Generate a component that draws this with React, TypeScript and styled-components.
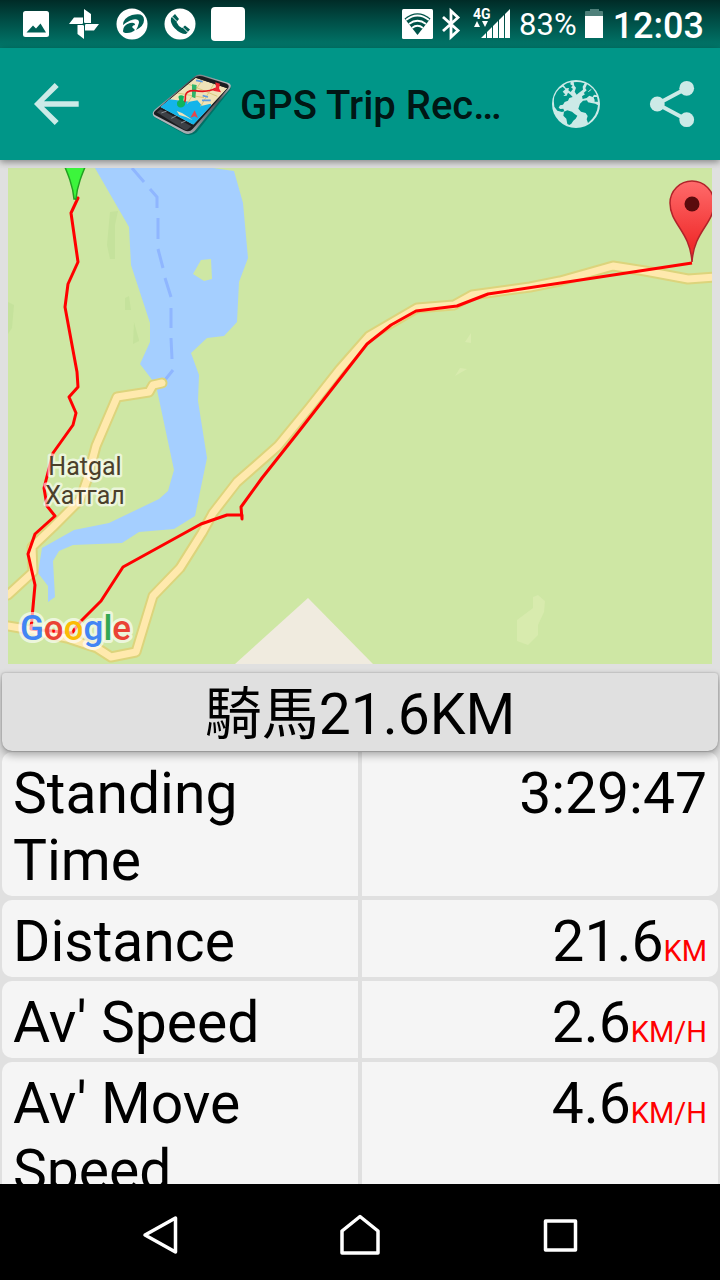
import React from "react";
import styled, { createGlobalStyle } from "styled-components";

const GlobalStyle = createGlobalStyle`
  * { box-sizing: border-box; }
  body {
    margin: 0;
    background: #e0e0e0;
    color: #000;
    font-family: Roboto, "Noto Sans CJK TC", sans-serif;
  }
`;

const Screen = styled.div`
  display: flex;
  flex-direction: column;
  height: 100vh;
  overflow: hidden;
`;

const StatusBar = styled.header`
  display: flex;
  flex: none;
  align-items: center;
  justify-content: space-between;
  height: 48px;
  padding: 0 16px 0 20px;
  color: #fff;
  background: linear-gradient(#002b27, #004f47 45%, #00796c);
`;

const StatusGroup = styled.div<{ $gap: number }>`
  display: flex;
  align-items: center;
  gap: ${(p) => p.$gap}px;
`;

const Icon = styled.svg`
  display: block;
  flex: none;
  overflow: visible;
`;

const BatteryText = styled.span`
  padding-top: 2px;
  font-size: 31px;
  line-height: 46px;
`;

const Clock = styled.time`
  padding-top: 4px;
  font-size: 36px;
  font-weight: 500;
  line-height: 44px;
`;

const AppBar = styled.div`
  position: relative;
  z-index: 1;
  display: flex;
  flex: none;
  align-items: center;
  height: 112px;
  padding: 0 24px 0 32px;
  background: #009688;
  box-shadow: 0 2px 7px rgba(0, 0, 0, 0.42);
`;

const BarButton = styled.button`
  flex: none;
  padding: 0;
  border: 0;
  background: none;
  color: #cceae7;
`;

const Brand = styled.div`
  display: flex;
  flex: 1;
  align-items: center;
  gap: 7px;
  min-width: 0;
  padding-left: 70px;
`;

const AppTitle = styled.h1`
  margin: 0;
  padding-top: 4px;
  overflow: hidden;
  color: rgba(0, 0, 0, 0.87);
  font-size: 40px;
  font-weight: 500;
  line-height: 48px;
  white-space: nowrap;
`;

const BarActions = styled.div`
  display: flex;
  flex: none;
  gap: 48px;
`;

const Content = styled.main`
  flex: 1;
  min-height: 0;
  overflow: hidden;
`;

const MapFrame = styled.div`
  padding: 8px 8px 0;
`;

const MapDrawing = styled.svg`
  display: block;
  width: 100%;
  height: auto;
`;

const TripName = styled.button`
  position: relative;
  z-index: 1;
  display: block;
  width: calc(100% - 4px);
  height: 78px;
  margin: 9px 2px 0;
  padding: 5px 0 0;
  border: 0;
  border-radius: 3px 3px 10px 10px;
  background: #e0e0e0;
  box-shadow: 0 0 2px rgba(0, 0, 0, 0.3), 0 4px 8px rgba(0, 0, 0, 0.32);
  color: #000;
  font: inherit;
  font-size: 57px;
  line-height: 67px;
`;

const Stats = styled.table`
  display: block;
  margin: 1px 2px 0;
`;

const StatsBody = styled.tbody`
  display: flex;
  flex-direction: column;
  gap: 4px;
`;

const StatRow = styled.tr`
  display: grid;
  grid-template-columns: 1fr 1fr;
  gap: 4px;
  font-size: 57px;
  line-height: 67px;
`;

const StatLabel = styled.th`
  padding: 8px 11px 2px;
  border-radius: 10px 0 0 10px;
  background: #f5f5f5;
  font-weight: 400;
  text-align: left;
`;

const StatValue = styled.td`
  padding: 8px 11px 2px;
  border-radius: 0 10px 10px 0;
  background: #f5f5f5;
  text-align: right;
`;

const Unit = styled.span`
  color: #f00;
  font-size: 29px;
  line-height: 1;
`;

const NavBar = styled.nav`
  display: flex;
  flex: none;
  height: 96px;
  padding: 0 60px;
  background: #000;
`;

const NavButton = styled.button`
  display: flex;
  flex: 1;
  align-items: center;
  justify-content: center;
  padding: 6px 0 0;
  border: 0;
  background: none;
  color: #fff;
`;

const ROAD_WEST = "M162 383 L153 385 L149 392 L117 397 L96 446 L87 480 L80 500 L53 527 L32 547 L33 572 L8 595";
const ROAD_MAIN =
  "M8 626 L20 628 L67 638 L97 648 L111 657 L136 652 L153 596 L180 568 L202 533 L213 513 L237 482 L278 446 L310 407 L340 369 L369 336 L417 308 L454 305 L472 295 L530 287 L560 281 L613 266 L645 271 L688 279 L714 277";
const ROUTE =
  "M75 199 L78 198 L71 213 L78 262 L68 284 L65 307 L77 372 L78 387 L69 397 L76 413 L73 425 L53 453 L44 488 L47 506 L55 516 L35 534 L28 554 L35 585 L31 629 L72 633 L80 622 L101 601 L123 567 L201 524 L227 515 L242 515 L242 519 L241 507 L262 478 L300 430 L367 344 L391 325 L416 311 L457 306 L488 294 L692 263";

function RouteMap() {
  return (
    <MapDrawing viewBox="8 168 704 496" role="img" aria-label="Route map near Hatgal">
      <defs>
        <linearGradient id="pin" x1="0" y1="0" x2="0" y2="1">
          <stop offset="0" stopColor="#ff6b6b" />
          <stop offset="0.8" stopColor="#f02c2c" />
        </linearGradient>
      </defs>
      <rect x="8" y="168" width="704" height="496" fill="#cee7a4" />
      <g fill="#c5e29c">
        <path d="M110 212 L118 211 L115 225 L115 259 L110 259 L107 245 Z" />
        <path d="M125 298 L129 296 L131 310 L125 310 Z" />
        <path d="M134 322 L139 340 L139 341 L133 344 Z" />
        <path d="M8 302 L14 305 L12 328 L8 334 Z" />
      </g>
      <g fill="#d8ebae">
        <path d="M533 597 L538 595 L545 601 L544 612 L538 625 L538 635 L528 645 L517 641 L517 620 L533 608 Z" />
        <path d="M465 342 L471 333 L471 343 Z M455 376 L460 368 L467 369 Z" />
      </g>
      <path d="M308 598 L235 664 H373 Z" fill="#f0ebdf" />
      <path
        d="M95 168 L129 227 L131 265 L150 323 L150 342 L140 364 L153 381 L157 390 L160 404 L174 470 L168 491 L159 499 L109 523 L74 530 L42 548 L38 573 L48 586 L48 602 L55 597 L53 561 L59 551 L73 545 L122 543 L139 532 L174 529 L195 516 L207 458 L198 401 L199 375 L191 353 L207 338 L224 336 L237 322 L239 282 L248 258 L243 203 L234 171 L213 168 Z"
        fill="#a5cfff"
      />
      <path d="M193 274 L201 260 L211 259 L212 279 L204 281 Z" fill="#cee7a4" />
      <path
        d="M132 168 L144 182 M150 189 L157 197 V208 M158 218 V239 M158 249 L163 268 M165 278 L171 297 M171 308 V328 M171 338 L172 359 M173 370 L165 380"
        fill="none"
        stroke="#8fb6ff"
        strokeWidth="3"
      />
      <g fill="none" strokeLinecap="round" strokeLinejoin="round">
        <path d={ROAD_WEST} stroke="#dcd47c" strokeWidth="11" />
        <path d={ROAD_MAIN} stroke="#dcd47c" strokeWidth="11" />
        <path d={ROAD_WEST} stroke="#ffe9ad" strokeWidth="7" />
        <path d={ROAD_MAIN} stroke="#ffe9ad" strokeWidth="7" />
        <path d={ROUTE} stroke="#f00" strokeWidth="3" strokeLinecap="butt" />
      </g>
      <g
        fill="#4b402b"
        stroke="#fff"
        strokeOpacity="0.6"
        strokeWidth="5"
        strokeLinejoin="round"
        paintOrder="stroke"
        fontFamily="Roboto, sans-serif"
        fontSize="25"
        textAnchor="middle"
      >
        <text x="85" y="475">Hatgal</text>
        <text x="85" y="504">Хатгал</text>
      </g>
      <text
        x="20"
        y="640"
        fontFamily="Roboto, sans-serif"
        fontSize="35"
        fontWeight="500"
        stroke="#fff"
        strokeOpacity="0.65"
        strokeWidth="6"
        strokeLinejoin="round"
        paintOrder="stroke"
      >
        <tspan fill="#4285f4">G</tspan>
        <tspan fill="#ea4335">o</tspan>
        <tspan fill="#fbbc05">o</tspan>
        <tspan fill="#4285f4">g</tspan>
        <tspan fill="#34a853">l</tspan>
        <tspan fill="#ea4335">e</tspan>
      </text>
      <path d="M62 160 C68 174 73 186 74 199 H76 C77 186 82 174 88 160 Z" fill="#3cf53c" stroke="#22a122" strokeWidth="1.5" />
      <path
        d="M692 262 C690 231 670 224 670 203 A22 22 0 0 1 714 203 C714 224 694 231 692 262 Z"
        fill="url(#pin)"
        stroke="#b1232a"
        strokeWidth="1.5"
      />
      <circle cx="692" cy="204" r="7.5" fill="#5a0b0d" />
    </MapDrawing>
  );
}

function PhoneLogo() {
  return (
    <Icon width="83" height="67" viewBox="448 72 249 201" aria-hidden="true">
      <defs>
        <linearGradient id="rim" x1="0" y1="1" x2="1" y2="0">
          <stop offset="0" stopColor="#d9dce0" />
          <stop offset="0.35" stopColor="#8b9097" />
          <stop offset="0.7" stopColor="#4d5157" />
          <stop offset="1" stopColor="#e4e7ea" />
        </linearGradient>
        <clipPath id="display">
          <path d="M585 92 L680 124 L578 233 L479 180 Z" />
        </clipPath>
      </defs>
      <path d="M466 214 Q452 206 464 192 L582 94 Q594 82 608 88 L682 110 Q696 116 688 130 L588 256 Q572 270 552 262 Z" fill="#00574f" opacity="0.6" />
      <path d="M462 210 Q450 200 462 188 L580 90 Q592 80 606 84 L682 107 Q696 112 687 126 L582 252 Q568 266 550 258 Z" fill="url(#rim)" />
      <path d="M464 205 Q455 199 464 191 L582 92 Q592 84 605 88 L678 110 Q688 115 682 124 L576 246 Q566 257 550 250 Z" fill="#1b1d20" />
      <path d="M468 196 L480 187 L572 238 L560 248 Q556 250 548 246 Z" fill="#3c4045" />
      <path d="M482 198 L498 192 M512 214 L528 206 M541 228 L556 221" stroke="#8a8f95" strokeWidth="3" />
      <g clipPath="url(#display)">
        <path d="M585 92 L680 124 L578 233 L479 180 Z" fill="#efe2b8" />
        <path d="M460 180 L500 156 L530 160 L566 164 L590 160 L604 176 L630 170 L640 190 L580 240 Z" fill="#14b4ea" />
        <path d="M528 192 L544 198 L566 212 L576 220 L556 210 L536 204 Z" fill="#efe2b8" />
        <path d="M560 110 L650 148 M606 96 L560 170 M640 110 L600 178 M530 138 L610 152" stroke="#d9c77b" strokeWidth="3" fill="none" />
        <path d="M574 112 L588 114 L584 154 L574 150 Z" fill="#2fb56a" />
        <path d="M606 146 L622 150 M586 100 L606 104 M604 160 L630 160" stroke="#5d9be0" strokeWidth="5" />
      </g>
      <path d="M544 174 Q556 166 554 148 Q554 130 582 131 Q622 137 646 124" fill="none" stroke="#e3131b" strokeWidth="5" />
      <path d="M644 106 L658 110 L655 124 L661 136 L637 131 L646 121 Z" fill="#ef2633" />
      <path d="M530 176 Q526 164 536 160 L533 149 Q540 141 550 148 L548 160 Q558 168 550 178 Q538 186 530 176 Z" fill="#0eb45d" />
      <path d="M582 190 L592 213 L582 208 L569 212 Z" fill="#e5474d" />
    </Icon>
  );
}

function GlobeIcon() {
  return (
    <Icon width="48" height="48" viewBox="576 104 144 144" aria-hidden="true">
      <circle cx="648" cy="176" r="72" fill="currentColor" />
      <g fill="#009688">
        <path d="M583 184 Q576 150 598 130 L608 124 L616 132 L608 139 L616 147 L610 152 L620 151 L624 142 L632 148 L638 155 L628 158 L624 166 L614 170 L609 178 L600 180 L596 187 L601 191 L610 190 L613 198 L606 200 L592 196 Z" />
        <path d="M611 120 Q620 113 632 111 L631 117 L638 121 L633 126 L639 131 L632 140 L625 135 L627 128 L618 129 Z" />
        <path d="M641 111 Q655 108 674 114 L668 124 L669 133 L657 142 L650 148 L644 139 L648 127 L643 121 Z" />
        <path d="M612 199 L622 195 L636 199 L645 207 L652 211 L647 220 L640 226 L634 235 L628 239 L622 236 L619 220 L610 211 Z" />
        <path d="M660 175 L669 166 L681 165 L684 171 L694 173 L706 175 L714 180 Q712 210 684 233 L680 222 L683 212 L677 203 L663 199 L655 190 Z" />
        <path d="M681 117 Q702 128 710 150 L702 148 L698 155 L688 151 L680 158 L668 161 L666 153 L675 147 L671 143 L680 135 L676 129 Z" />
        <path d="M701 155 L711 155 L714 169 L704 169 Z" />
      </g>
      <path d="M680 162 L690 165 L704 164 M685 139 L694 132 M613 143 L620 137" stroke="currentColor" strokeWidth="3" fill="none" />
    </Icon>
  );
}

const stats = [
  { label: "Standing Time", value: "3:29:47", unit: "" },
  { label: "Distance", value: "21.6", unit: "KM" },
  { label: "Av' Speed", value: "2.6", unit: "KM/H" },
  { label: "Av' Move Speed", value: "4.6", unit: "KM/H" },
];

export default function App() {
  return (
    <Screen>
      <GlobalStyle />
      <StatusBar>
        <StatusGroup $gap={16}>
          <Icon width="32" height="32" viewBox="0 0 32 32">
            <rect x="3" y="3" width="26" height="26" rx="2.5" fill="#fff" />
            <path d="M6.5 24.5 L13 17.5 L16 20.5 L20.5 15.5 L26 24.5 Z" fill="#005f55" />
          </Icon>
          <Icon width="32" height="32" viewBox="0 0 32 32" fill="#fff">
            <path d="M16 1 L23 6 V15 H16 Z M31 16 L26 22.500 H17 V16 Z M16 31 L9.500 26 V17 H16 Z M1 16 L6 9.500 H15 V16 Z" />
            <circle cx="16" cy="16" r="1.500" fill="#005f55" />
          </Icon>
          <Icon width="32" height="32" viewBox="0 0 32 32">
            <circle cx="16" cy="16" r="15.500" fill="#fff" />
            <path d="M7 17 Q7 10 16 7 Q28 4 28 12 Q28 18 20 22 Q24 16 21 13 Q16 10 7 17 Z" fill="#005f55" />
            <path d="M7 23 Q7 17 14 15 Q19 14 19 17 Q17 17 16 19 Q18 21 19 22 Q16 25 11 25 Q7 25 7 23 Z" fill="#005f55" />
            <path d="M13 13 Q19 10 22 12 Q24 14 22 17 Q22 14 19 13 Q16 12 13 13 Z" fill="#fff" />
          </Icon>
          <Icon width="32" height="32" viewBox="0 0 32 32">
            <circle cx="16" cy="16" r="15.500" fill="#fff" />
            <path d="M7 10 L11 6 L15 11 L12.500 14 Q14 18 18 20 L21 17.500 L26 21.500 L22 26 Q16 26 10.500 20 Q6 15 7 10 Z" fill="#005f55" />
            <path d="M8 8.500 L13 13.500 M18.500 19 L23.500 24" stroke="#fff" strokeWidth="1" />
          </Icon>
          <Icon width="32" height="32" viewBox="0 0 32 32">
            <rect x="-1" y="-1" width="34" height="34" rx="4" fill="#fff" />
          </Icon>
        </StatusGroup>
        <StatusGroup $gap={8}>
          <Icon width="32" height="32" viewBox="0 0 32 32">
            <rect x="1" y="1" width="31" height="30" rx="1.500" fill="#fff" />
            <path d="M16.500 27 L3.500 10.500 Q16.500 0 29.500 10.500 Z" fill="#005349" />
            <path d="M5 12 Q16.500 3 28 12 M8 16 Q16.500 9.500 25 16 M11 20 Q16.500 15.500 22 20" fill="none" stroke="#fff" strokeWidth="1.800" />
          </Icon>
          <Icon width="20" height="32" viewBox="0 0 20 32">
            <path d="M2 9 L17 22.500 L10 29 V3 L17 9.500 L2 23" fill="none" stroke="#fff" strokeWidth="2.800" />
          </Icon>
          <Icon width="42" height="32" viewBox="0 0 42 32" fill="#fff">
            <text x="4" y="11" fontSize="14" fontWeight="700" fontFamily="Roboto, sans-serif">4G</text>
            <path d="M5 19 L8 13 L11 19 Z M13 13 H19 L16 19 Z" />
            <path d="M12 30 L17 25 V30 Z M18 24 L23 19 V30 H18 Z M24 18 L29 13 V30 H24 Z M30 12 L35 7 V30 H30 Z M36 6 L41 1 V30 H36 Z" />
          </Icon>
          <BatteryText>83%</BatteryText>
          <Icon width="20" height="32" viewBox="0 0 20 32">
            <path d="M0 4 Q0 3 1 3 H5 V1 H14 V3 H17 Q18 3 18 4 V10 H0 Z" fill="#4f807a" />
            <path d="M0 8 H18 V30 H0 Z" fill="#fff" />
          </Icon>
          <Clock>12:03</Clock>
        </StatusGroup>
      </StatusBar>
      <AppBar>
        <BarButton aria-label="Back">
          <Icon width="48" height="48" viewBox="0 0 48 48" fill="currentColor">
            <path d="M2 24 L22.700 3 L26.700 7 L12 21.300 H46.700 V26.700 H12 L26.700 41 L22.700 45 Z" />
          </Icon>
        </BarButton>
        <Brand>
          <PhoneLogo />
          <AppTitle>GPS Trip Rec…</AppTitle>
        </Brand>
        <BarActions>
          <BarButton aria-label="Open on globe">
            <GlobeIcon />
          </BarButton>
          <BarButton aria-label="Share">
            <Icon width="48" height="48" viewBox="0 0 48 48" fill="currentColor">
              <path d="M38.700 8.300 L9.300 24 L38.700 39.700" fill="none" stroke="currentColor" strokeWidth="4" />
              <circle cx="9.300" cy="24" r="7.400" />
              <circle cx="38.700" cy="8.300" r="7.400" />
              <circle cx="38.700" cy="39.700" r="7.400" />
            </Icon>
          </BarButton>
        </BarActions>
      </AppBar>
      <Content>
        <MapFrame>
          <RouteMap />
        </MapFrame>
        <TripName>騎馬21.6KM</TripName>
        <Stats>
          <StatsBody>
            {stats.map((s) => (
              <StatRow key={s.label}>
                <StatLabel scope="row">{s.label}</StatLabel>
                <StatValue>
                  {s.value}
                  {s.unit && <Unit>{s.unit}</Unit>}
                </StatValue>
              </StatRow>
            ))}
          </StatsBody>
        </Stats>
      </Content>
      <NavBar>
        <NavButton aria-label="Back">
          <Icon width="40" height="44" viewBox="0 0 40 44">
            <path d="M35.500 5 V39 L5 22 Z" fill="none" stroke="#fff" strokeWidth="3.500" strokeLinejoin="round" />
          </Icon>
        </NavButton>
        <NavButton aria-label="Home">
          <Icon width="40" height="44" viewBox="0 0 40 44">
            <path d="M2 40 V18 L20 3.500 L38 18 V40 Z" fill="none" stroke="#fff" strokeWidth="3.500" strokeLinejoin="round" />
          </Icon>
        </NavButton>
        <NavButton aria-label="Recent apps">
          <Icon width="40" height="44" viewBox="0 0 40 44">
            <rect x="5.500" y="8" width="30" height="29" fill="none" stroke="#fff" strokeWidth="3.500" strokeLinejoin="round" />
          </Icon>
        </NavButton>
      </NavBar>
    </Screen>
  );
}
